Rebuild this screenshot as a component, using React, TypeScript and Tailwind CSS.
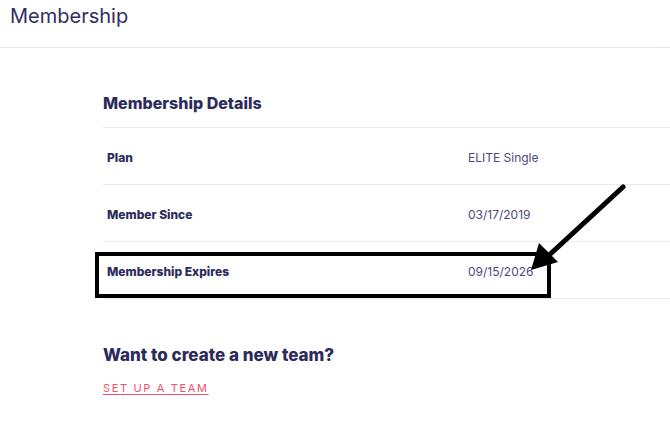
import React from 'react';

const rows = [
  { label: 'Plan', value: 'ELITE Single' },
  { label: 'Member Since', value: '03/17/2019' },
  { label: 'Membership Expires', value: '09/15/2026' },
];

const App: React.FC = () => {
  return (
    <div className="relative w-[670px] h-[423px] overflow-hidden bg-white font-['Inter','Lato',sans-serif] text-[#2c2b5c]">
      <header className="h-[48px] border-b border-[#e3e4f6] px-[10px] flex items-center">
        <h1 className="text-[20px] leading-[28px] -mt-[16px] text-[#2f2e62]">Membership</h1>
      </header>

      <main className="pl-[103px]">
        <h2 className="mt-[43px] text-[16px] leading-[24px] font-extrabold">Membership Details</h2>
        <div className="mt-[12px] border-t border-[#ebebf4]">
          {rows.map(r => (
            <div key={r.label} className="h-[57px] pt-[3px] border-b border-[#e8e9f5] flex items-center">
              <div className="w-[365px] pl-[4px] text-[12px] font-extrabold">{r.label}</div>
              <div className="text-[12px] text-[#4a4a7c]">{r.value}</div>
            </div>
          ))}
        </div>

        <h2 className="mt-[44px] text-[17px] leading-[24px] font-extrabold">Want to create a new team?</h2>
        <a href="#" className="inline-block mt-[14px] text-[11px] leading-[14px] tracking-[0.15em] text-[#f0506e] underline underline-offset-2">
          SET UP A TEAM
        </a>
      </main>

      {/* annotation overlay */}
      <div className="absolute left-[95px] top-[252px] w-[456px] h-[46px] border-[4px] border-black" />
      <svg className="absolute left-0 top-0 pointer-events-none" width="670" height="423">
        <line x1="623" y1="187" x2="546" y2="258" stroke="black" strokeWidth="5" strokeLinecap="round" />
        <polygon points="531,270 539,243 558,262" fill="black" />
      </svg>
    </div>
  );
};

export default App;
